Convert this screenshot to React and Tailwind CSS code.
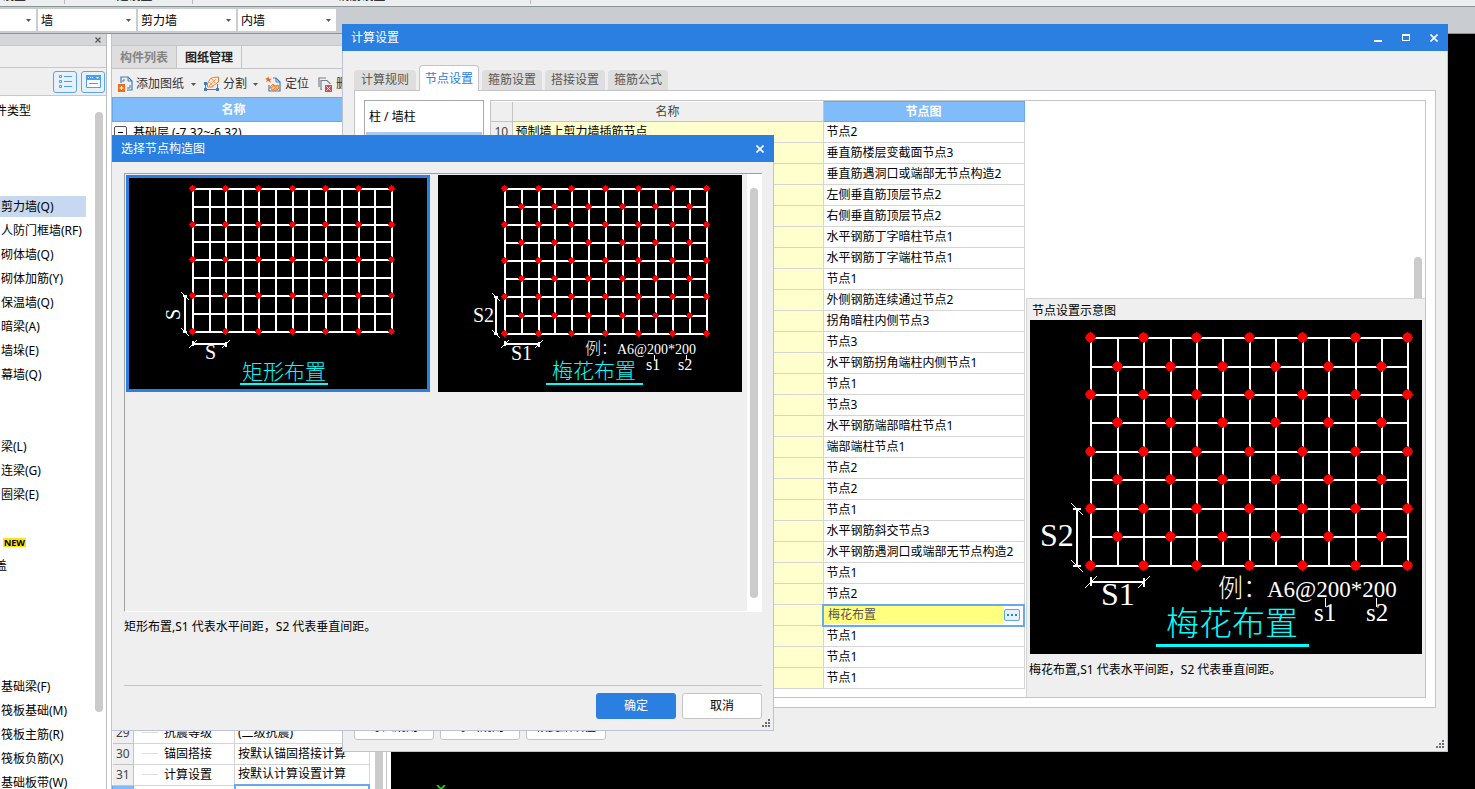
import React from "react";

const categories = [
  "", "", "",
  "剪力墙(Q)", "人防门框墙(RF)", "砌体墙(Q)", "砌体加筋(Y)", "保温墙(Q)", "暗梁(A)", "墙垛(E)", "幕墙(Q)",
  "", "",
  "梁(L)", "连梁(G)", "圈梁(E)",
  "", "NEW", "盖", "", "", "", "",
  "基础梁(F)", "筏板基础(M)", "筏板主筋(R)", "筏板负筋(X)", "基础板带(W)",
];

const nodeRows = [
  "节点2", "垂直筋楼层变截面节点3", "垂直筋遇洞口或端部无节点构造2", "左侧垂直筋顶层节点2",
  "右侧垂直筋顶层节点2", "水平钢筋丁字暗柱节点1", "水平钢筋丁字端柱节点1", "节点1",
  "外侧钢筋连续通过节点2", "拐角暗柱内侧节点3", "节点3", "水平钢筋拐角端柱内侧节点1",
  "节点1", "节点3", "水平钢筋端部暗柱节点1", "端部端柱节点1", "节点2", "节点2", "节点1",
  "水平钢筋斜交节点3", "水平钢筋遇洞口或端部无节点构造2", "节点1", "节点2", "梅花布置",
  "节点1", "节点1", "节点1",
];

const properties = [
  { no: 28, name: "", value: "" },
  { no: 29, name: "抗震等级", value: "(二级抗震)" },
  { no: 30, name: "锚固搭接", value: "按默认锚固搭接计算" },
  { no: 31, name: "计算设置", value: "按默认计算设置计算" },
];

const settingTabs = ["计算规则", "节点设置", "箍筋设置", "搭接设置", "箍筋公式"];

const rectDiagram = {
  width: 304, height: 217, radius: 3,
  xs: [67, 84, 100, 117, 133, 150, 167, 183, 200, 216, 233, 249, 266],
  ys: [14, 32, 50, 67, 85, 103, 121, 139, 157],
  staggered: false,
  dimV: { x: 59, from: 121, to: 157 },
  dimH: { y: 169, from: 67, to: 100 },
  texts: [{ x: 79, y: 184, size: 20, text: "S" }],
  rotated: { x: 54, y: 145, size: 20, text: "S" },
  title: { x: 116, y: 204, size: 21, text: "矩形布置" },
  underline: { x: 114, y: 208, width: 88, height: 2 },
  leaders: [],
};

const plumDiagram = {
  width: 304, height: 217, radius: 3,
  xs: [67, 84, 101, 117, 134, 151, 168, 185, 201, 218, 235, 252, 269],
  ys: [14, 32, 50, 68, 86, 104, 122, 141, 159],
  staggered: true,
  dimV: { x: 58, from: 122, to: 159 },
  dimH: { y: 169, from: 67, to: 101 },
  texts: [
    { x: 35, y: 147, size: 20, text: "S2" },
    { x: 73, y: 185, size: 20, text: "S1" },
    { x: 147, y: 179, size: 16, text: "例：" },
    { x: 179, y: 179, size: 14, text: "A6@200*200" },
    { x: 208, y: 195, size: 16, text: "s1" },
    { x: 240, y: 195, size: 16, text: "s2" },
  ],
  title: { x: 114, y: 203, size: 21, text: "梅花布置" },
  underline: { x: 108, y: 208, width: 97, height: 2 },
  leaders: [{ x: 216, from: 180, to: 185 }, { x: 248, from: 180, to: 185 }],
};

const previewDiagram = {
  width: 392, height: 334, radius: 5,
  xs: [61, 88, 114, 141, 167, 193, 220, 246, 273, 299, 326, 352, 378],
  ys: [18, 47, 75, 103, 132, 160, 189, 217, 246],
  staggered: true,
  dimV: { x: 47, from: 189, to: 246 },
  dimH: { y: 262, from: 61, to: 114 },
  texts: [
    { x: 10, y: 226, size: 32, text: "S2" },
    { x: 71, y: 285, size: 32, text: "S1" },
    { x: 188, y: 277, size: 25, text: "例：" },
    { x: 237, y: 277, size: 23, text: "A6@200*200" },
    { x: 284, y: 301, size: 25, text: "s1" },
    { x: 336, y: 301, size: 25, text: "s2" },
  ],
  title: { x: 136, y: 315, size: 33, text: "梅花布置" },
  underline: { x: 126, y: 324, width: 153, height: 3 },
  leaders: [{ x: 295, from: 278, to: 287 }, { x: 346, from: 278, to: 287 }],
};

const Diagram = ({ data }) => {
  const { xs, ys, radius, dimV, dimH, rotated, title, underline } = data;
  const left = xs[0];
  const right = xs[xs.length - 1];
  const top = ys[0];
  const bottom = ys[ys.length - 1];
  const tick = radius === 5 ? 4 : 2;
  const slash = radius === 5 ? 6 : 4;

  return (
    <svg
      width={data.width}
      height={data.height}
      viewBox={`0 0 ${data.width} ${data.height}`}
      className="block bg-black font-['Liberation_Serif','Noto_Sans_CJK_SC',serif] font-light"
      role="img"
      aria-label={title.text}
    >
      {/* Rebar grid */}
      <g stroke="#fff" strokeWidth="2" shapeRendering="crispEdges">
        {xs.map((x) => <line key={x} x1={x} x2={x} y1={top} y2={bottom} />)}
        {ys.map((y) => <line key={y} x1={left - 1} x2={right + 1} y1={y} y2={y} />)}
        <line x1={dimV.x} x2={dimV.x} y1={dimV.from} y2={dimV.to} />
        <line x1={dimV.x - tick} x2={dimV.x + tick} y1={dimV.from} y2={dimV.from} />
        <line x1={dimV.x - tick} x2={dimV.x + tick} y1={dimV.to} y2={dimV.to} />
        <line x1={dimH.from} x2={dimH.to} y1={dimH.y} y2={dimH.y} />
        <line x1={dimH.from} x2={dimH.from} y1={dimH.y - tick - 1} y2={dimH.y + tick} />
        <line x1={dimH.to} x2={dimH.to} y1={dimH.y - tick} y2={dimH.y + tick + 1} />
      </g>
      <g stroke="#fff" strokeWidth="1">
        {[dimV.from, dimV.to].map((y) => (
          <line key={y} x1={dimV.x - slash} y1={y - slash} x2={dimV.x + slash} y2={y + slash} />
        ))}
        {[dimH.from, dimH.to].map((x) => (
          <line key={x} x1={x - slash} y1={dimH.y + slash} x2={x + slash} y2={dimH.y - slash} />
        ))}
        {data.leaders.map((l) => (
          <line key={l.x} x1={l.x} x2={l.x} y1={l.from} y2={l.to} shapeRendering="crispEdges" />
        ))}
      </g>

      {/* Tie points */}
      <g fill="#f00" stroke="#f00">
        {ys.map((y, r) =>
          xs.map((x, c) => {
            const even = r % 2 === 0 && c % 2 === 0;
            const odd = r % 2 === 1 && c % 2 === 1;
            if (!even && !(data.staggered && odd)) return null;
            return (
              <g key={`${r}-${c}`}>
                <circle cx={x - 0.5} cy={y - 0.5} r={radius - 0.5} />
                <path d={`M${x - 1 - radius} ${y - 0.5}h${radius * 2 + 1}M${x - 0.5} ${y - 1 - radius}v${radius * 2 + 1}`} />
              </g>
            );
          })
        )}
      </g>

      <g fill="#fff">
        {data.texts.map((t) => (
          <text key={t.text} x={t.x} y={t.y} fontSize={t.size}>{t.text}</text>
        ))}
        {rotated && (
          <text x={rotated.x} y={rotated.y} fontSize={rotated.size} transform={`rotate(-90 ${rotated.x} ${rotated.y})`}>
            {rotated.text}
          </text>
        )}
      </g>
      <text x={title.x} y={title.y} fontSize={title.size} fill="#0ff">{title.text}</text>
      <rect {...underline} fill="#0ff" />
    </svg>
  );
};

const Combo = ({ label, value, width }) => (
  <div className={`relative h-[22px] bg-white ${width}`}>
    <select aria-label={label} defaultValue={value} className="block h-full w-full appearance-none bg-white pl-[3px] pt-[2px] text-xs text-black outline-none">
      <option>{value}</option>
    </select>
    <svg width="5" height="3" viewBox="0 0 5 3" className="pointer-events-none absolute right-[5px] top-[10px]">
      <path d="M0 0h5L2.5 3z" fill="#555" />
    </svg>
  </div>
);

const Caret = () => (
  <svg width="5" height="3" viewBox="0 0 5 3" className="shrink-0">
    <path d="M0 0h5L2.5 3z" fill="#555" />
  </svg>
);

const CloseIcon = ({ color = "#fff" }) => (
  <svg width="8" height="8" viewBox="0 0 8 8">
    <path d="M.5.5l7 7M7.5.5l-7 7" stroke={color} strokeWidth="1.6" fill="none" />
  </svg>
);

const Grip = () => (
  <svg width="8" height="8" viewBox="0 0 8 8" className="absolute bottom-[3px] right-[3px]" fill="#6d6d78">
    <path d="M6 0h2v2H6zM3 3h2v2H3zM6 3h2v2H6zM0 6h2v2H0zM3 6h2v2H3zM6 6h2v2H6z" />
  </svg>
);

const AddDrawingIcon = () => (
  <svg width="15" height="16" viewBox="0 0 15 16" fill="none">
    <path d="M3 7V1h7l4 4v9H9" stroke="#3b7fc0" strokeWidth="1.2" />
    <path d="M10 1v4h4M5 6V4h2M12 9v3h-3" stroke="#3b7fc0" />
    <path d="M0 8h7v8H0z" fill="#ee6c1c" />
    <path d="M3.5 10v4M1.5 12h4" stroke="#fff" strokeWidth="1.2" />
  </svg>
);

const SplitIcon = () => (
  <svg width="17" height="16" viewBox="0 0 17 16" fill="none">
    <path d="M2.5 14V7M14.5 14V8M1 13.5h15M1 7.5h4" stroke="#3b7fc0" />
    <path d="M1 6h3v3H1zM1 12h3v3H1zM13 12h3v3h-3z" fill="#3b7fc0" />
    <path d="M4.500 7.500l3-5 3-1 5-.5v5l-3 2-3 3h-5z" fill="#fdeadb" stroke="#ee7d2e" />
    <path d="M6 10l7-7M6 6l4 4M9 3l3 4" stroke="#ee7d2e" strokeWidth=".7" />
  </svg>
);

const LocateIcon = () => (
  <svg width="16" height="16" viewBox="0 0 16 16" fill="none">
    <path d="M8 2h3l4 4v9H4V9" stroke="#3b7fc0" strokeWidth="1.2" />
    <path d="M11 2v4h4" stroke="#3b7fc0" />
    <path d="M3 0l1 2.500 3 .5-2 1 1 3-2.500-2L1 6l1-2-2-1.500 2.500-.5z" fill="#ee6c1c" />
    <path d="M5 11l3-3 2 2 3-1 1 3-2 2H7z" fill="#f8c49b" stroke="#ee7d2e" />
    <path d="M6 12l3-3M8 14l4-4M8 9l4 4" stroke="#ee7d2e" strokeWidth=".8" />
  </svg>
);

const DeleteIcon = () => (
  <svg width="15" height="15" viewBox="0 0 15 15" fill="none">
    <path d="M1 10V1h7M4 12.5H3V3.5h6l3 3V7" stroke="#75828c" strokeWidth="1.2" />
    <path d="M7 8h7v7H7z" fill="#d8474d" />
    <path d="M8.5 9.5l4 4M12.5 9.5l-4 4" stroke="#fff" />
  </svg>
);

const CategoryPanel = () => (
  <aside className="flex w-[107px] shrink-0 flex-col border-r border-[#bbbbc3] bg-white">
    <div className="flex h-3 items-center justify-end border-b border-[#c4c6cb] bg-[#d5d5da] pr-[5px]">
      <button aria-label="关闭" className="flex"><svg width="6" height="6" viewBox="0 0 6 6"><path d="M.5.5l5 5M5.5.5l-5 5" stroke="#555" strokeWidth="1.2" /></svg></button>
    </div>
    <div className="h-[22px] border-b border-[#c8c8c8] bg-[#efefef]" />
    <div className="flex h-7 items-center justify-end gap-1 border-b border-[#c8c8c8] bg-[#efefef] pr-px">
      <button aria-label="列表" className="flex h-[22px] w-6 items-center justify-center rounded-[3px] border border-[#5aa5ef] bg-[#e6f1fc]">
        <svg width="13" height="13" viewBox="0 0 13 13" fill="none" stroke="#4f9eea">
          <path d="M.5.5h2v2h-2zM.5 5.5h2v2h-2zM.5 10.5h2v2h-2zM5 1.5h8M5 6.5h8M5 11.5h8" />
        </svg>
      </button>
      <button aria-label="视图" className="flex h-[22px] w-6 items-center justify-center rounded-[3px] border border-[#5aa5ef] bg-[#e6f1fc]">
        <svg width="15" height="13" viewBox="0 0 15 13" fill="none">
          <path d="M.5.5h14v12H.5z" fill="#fff" stroke="#4f9eea" />
          <path d="M0 0h15v5H0z" fill="#4f9eea" />
          <path d="M2 2h1v1H2zM4 2h1v1H4zM6 2h1v1H6zM10 2h3l-1.5 2z" fill="#fff" />
          <path d="M3 8.5h9" stroke="#4f9eea" />
        </svg>
      </button>
    </div>
    <div className="flex min-h-0 flex-1 justify-between">
      <div className="min-w-0 flex-1 overflow-hidden whitespace-nowrap">
        <p className="-ml-[17px] pt-1 leading-[22px]">构件类型</p>
        {categories.map((item, i) => {
          if (item === "NEW") {
            return (
              <div key={i} className="flex h-6 items-center pl-[3px]">
                <span className="bg-[#ffe11a] px-px text-[9px] font-bold leading-[9px]">NEW</span>
              </div>
            );
          }
          if (item === "盖") return <p key={i} className="-ml-[5px] h-6 leading-6">{item}</p>;
          return (
            <div key={i} className="flex h-6 items-center">
              <span className={i === 3 ? "w-[86px] bg-[#c7d9f1] pl-px leading-[21px]" : "pl-px leading-[21px]"}>{item}</span>
            </div>
          );
        })}
      </div>
      <div className="mr-[3px] mt-4 h-[600px] w-2 shrink-0 rounded-full bg-[#cbcbcb]" />
    </div>
  </aside>
);

const DrawingPanel = () => (
  <section className="flex w-[280px] shrink-0 flex-col border-l border-[#bcc3d0] bg-white">
    <div className="h-3 shrink-0 border-b border-[#c4c6cb] bg-[#d5d5da]" />
    <div className="flex h-[23px] shrink-0 border-b border-[#c4c4c8] bg-[#efefef] font-bold leading-6">
      <button className="w-[65px] border-r border-[#c4c4c8] bg-[#dedede] text-[#858585]">构件列表</button>
      <button className="w-[65px] border-r border-[#c4c4c8] text-[#222]">图纸管理</button>
    </div>
    <div className="flex h-7 shrink-0 items-center overflow-hidden whitespace-nowrap bg-[#efefef] pl-[6px] pt-[2px] text-[#333]">
      <button className="flex items-center gap-[3px]"><AddDrawingIcon />添加图纸</button>
      <button aria-label="更多添加" className="pl-[7px] pr-[7px]"><Caret /></button>
      <button className="flex items-center gap-[3px]"><SplitIcon />分割</button>
      <button aria-label="更多分割" className="pl-[6px] pr-[7px]"><Caret /></button>
      <button className="flex items-center gap-1"><LocateIcon />定位</button>
      <button className="ml-[9px] flex items-center gap-[3px]"><DeleteIcon />删除</button>
    </div>
    <div className="h-[25px] w-[243px] shrink-0 border border-[#69a9ea] bg-[#80bbfa] text-center font-bold leading-[23px] text-white">名称</div>
    <div className="h-[579px] shrink-0">
      <div className="flex items-center gap-1 pl-[2px] pt-[2px] leading-[17px]">
        <button aria-label="折叠" className="flex h-[13px] w-[13px] items-center justify-center rounded-[2px] border border-[#555]">
          <span className="h-px w-[5px] bg-black" />
        </button>
        <span className="pl-[2px]">基础层 (-7.32~-6.32)</span>
      </div>
    </div>
    <div className="flex">
      <table className="w-[258px] table-fixed border-collapse">
        <tbody>
          {properties.map((p) => (
            <tr key={p.no} className="h-[21px] whitespace-nowrap">
              <td className="w-[21px] border-b border-r border-[#c4c4c4] bg-[#efefef] p-0 text-center text-[#444]">{p.no}</td>
              <td className="w-[101px] border-b border-r border-[#d5d5d5] p-0">
                <div className="flex items-center gap-[6px] pl-2">
                  <span className="h-px w-4 bg-[#ddd]" />{p.name}
                </div>
              </td>
              <td className="border-b border-r border-[#d5d5d5] p-0 pl-[3px]">{p.value}</td>
            </tr>
          ))}
          <tr className="h-[21px]">
            <td className="border border-[#69a9ea] bg-[#80bbfa] p-0" />
            <td className="p-0" />
            <td className="border-2 border-[#69a9ea] p-0" />
          </tr>
        </tbody>
      </table>
      <div className="ml-[5px] w-2 bg-[#cbcbcb]" />
      <div className="ml-[3px] w-px bg-[#c4c4c4]" />
    </div>
  </section>
);

const SettingsDialog = () => (
  <div role="dialog" aria-label="计算设置" className="absolute left-[342px] right-[27px] top-6 flex flex-col border-b border-x border-[#bcc3d0] bg-[#efefef]">
    <header className="-mx-px flex h-[27px] items-center justify-between bg-[#2b7fe1] pl-[9px] pr-[10px] text-white">
      <h1>计算设置</h1>
      <div className="flex items-center gap-5">
        <button aria-label="最小化" className="flex h-2 w-2 items-end"><span className="h-[2px] w-full bg-white" /></button>
        <button aria-label="最大化" className="h-[7px] w-2 border border-t-2 border-white" />
        <button aria-label="关闭" className="flex"><CloseIcon /></button>
      </div>
    </header>

    <nav className="relative z-10 flex items-end gap-[3px] pl-[11px] pt-[14px]">
      {settingTabs.map((tab) =>
        tab === "节点设置" ? (
          <button key={tab} className="-mb-px h-[26px] w-[60px] rounded-t-[4px] border border-b-0 border-[#c4c4c8] bg-white text-[#2b7fe1]">{tab}</button>
        ) : (
          <button key={tab} className="h-5 w-[60px] rounded-t-[4px] bg-[#dedede] text-[#555] first:w-[62px]">{tab}</button>
        )
      )}
    </nav>

    <div className="mx-[11px] flex h-[618px] border border-[#c4c4c8] bg-white p-[9px]">
      <div className="h-[597px] w-[120px] shrink-0 border border-[#aaa] p-px">
        <p className="pl-[3px] leading-[30px]">柱 / 墙柱</p>
        <div className="h-[30px] bg-[#a9c8ef]" />
      </div>

      <div className="ml-[6px] flex h-[598px] min-w-0 flex-1 border border-[#c4c4c4]">
        <table className="h-[587px] w-[534px] shrink-0 table-fixed border-collapse">
          <thead>
            <tr className="h-5 bg-[#efefef] leading-[19px] text-[#444]">
              <th className="w-[21px] border-b border-r border-[#c4c4c4] p-0" />
              <th className="border-b border-r border-[#c4c4c4] p-0 font-normal">名称</th>
              <th className="w-[201px] border border-[#69a9ea] bg-[#80bbfa] p-0 text-white">节点图</th>
            </tr>
          </thead>
          <tbody>
            {nodeRows.map((node, i) => (
              <tr key={i} className="h-[21px] whitespace-nowrap">
                <td className="border-b border-r border-[#c4c4c4] bg-[#efefef] p-0 text-center text-[#444]">{i + 10}</td>
                <td className="border-b border-r border-[#d5d5d5] bg-[#ffffce] p-0 pl-[3px]">{i === 0 && "预制墙上剪力墙插筋节点"}</td>
                {node === "梅花布置" ? (
                  <td className="border-2 border-[#69a9ea] p-0">
                    <div className="flex h-[18px] items-center justify-between bg-[#ffff80] text-[#555]">
                      <span className="pl-1">{node}</span>
                      <span className="flex h-full items-center bg-white pr-[3px]">
                        <button aria-label="选择节点图" className="flex h-3 w-4 items-center justify-center gap-[2px] rounded-[2px] border border-[#5aa5ef] bg-[#e6f1fc]">
                          <span className="h-[2px] w-[2px] bg-[#2f80c8]" />
                          <span className="h-[2px] w-[2px] bg-[#2f80c8]" />
                          <span className="h-[2px] w-[2px] bg-[#2f80c8]" />
                        </button>
                      </span>
                    </div>
                  </td>
                ) : (
                  <td className="border-b border-r border-[#d5d5d5] p-0 pl-[3px]">{node}</td>
                )}
              </tr>
            ))}
          </tbody>
        </table>

        <div className="ml-px flex min-w-0 flex-1 flex-col">
          <div className="flex h-[197px] items-end justify-end pr-[3px]">
            <div className="h-[41px] w-2 rounded-t-full bg-[#cbcbcb]" />
          </div>
          <div className="flex-1 border-l border-t border-[#d5d5d5] bg-[#efefef] pl-[3px]">
            <p className="pl-[2px] pt-[2px] leading-[19px]">节点设置示意图</p>
            <Diagram data={previewDiagram} />
            <p className="-ml-px pt-[6px] leading-[19px]">梅花布置,S1 代表水平间距，S2 代表垂直间距。</p>
          </div>
        </div>
      </div>
    </div>

    <footer className="flex gap-[6px] px-[11px] pb-[11px] pt-[6px]">
      {["导入规则", "导出规则", "恢复默认值"].map((label) => (
        <button key={label} className="h-[26px] w-20 rounded-[3px] border border-[#c4c4c8] bg-white">{label}</button>
      ))}
    </footer>
    <Grip />
  </div>
);

const PickerDialog = () => (
  <div role="dialog" aria-label="选择节点构造图" className="absolute left-[111px] top-[135px] w-[663px] border-b border-x border-[#bcc3d8] bg-[#efefef]">
    <header className="-mr-px flex h-[27px] items-center justify-between bg-[#2b7fe1] pl-[9px] pr-[10px] text-white">
      <h2>选择节点构造图</h2>
      <button aria-label="关闭" className="flex"><CloseIcon /></button>
    </header>

    <div className="pl-3 pr-[11px] pt-[11px]">
      <div className="flex h-[439px] justify-between border-l border-t border-b border-b-white border-[#a0a0a0]">
        <div className="flex gap-2 pl-px pt-px">
          <button className="relative h-[217px]">
            <Diagram data={rectDiagram} />
            <span className="absolute inset-0 border-[3px] border-[#2b7fe1]" />
          </button>
          <button className="h-[217px]"><Diagram data={plumDiagram} /></button>
        </div>
        <div className="flex w-[15px] bg-white pl-[3px] pt-[14px]">
          <div className="h-[410px] w-2 rounded-full bg-[#cbcbcb]" />
        </div>
      </div>
      <p className="h-[73px] pt-[5px] leading-[19px]">矩形布置,S1 代表水平间距，S2 代表垂直间距。</p>
      <div className="flex justify-end gap-[6px] border-t border-[#c4c4c4] pb-[11px] pt-[7px]">
        <button className="h-[26px] w-20 rounded-[3px] bg-[#2b7fe1] text-white">确定</button>
        <button className="h-[26px] w-20 rounded-[3px] border border-[#c4c4c8] bg-white">取消</button>
      </div>
    </div>
    <Grip />
  </div>
);

const App = () => {
  return (
    <div className="relative flex h-screen flex-col overflow-hidden bg-[#c9ccd1] font-['Noto_Sans','Noto_Sans_CJK_SC',sans-serif] text-xs text-black">
      {/* Bottom edge of the ribbon groups */}
      <div className="flex h-[7px] shrink-0 items-end overflow-hidden border-b border-[#8d9494] bg-[#ebefef] text-center leading-4">
        <span className="mb-[2px] flex w-[65px] justify-end border-r border-[#bbb] pr-[38px] whitespace-nowrap">基本设置</span>
        <span className="mb-[2px] w-32 border-r border-[#bbb]">土建设置</span>
        <span className="mb-[2px] w-[338px] border-r border-[#bbb]">钢筋设置</span>
      </div>

      <div className="flex h-[27px] shrink-0 gap-[2px] border-b border-[#8d9494] pt-[2px]">
        <Combo label="楼层" value="" width="w-9" />
        <Combo label="构件大类" value="墙" width="w-[98px]" />
        <Combo label="构件类型" value="剪力墙" width="w-[98px]" />
        <Combo label="构件名称" value="内墙" width="w-[98px]" />
      </div>

      <main className="flex min-h-0 flex-1 overflow-hidden bg-white">
        <CategoryPanel />
        <div className="w-1 shrink-0" />
        <DrawingPanel />
        <div className="flex min-w-0 flex-1 items-end bg-black pl-[45px]">
          <svg width="10" height="4" viewBox="0 0 10 4"><path d="M1 0l4 4 4-4" stroke="#0f0" strokeWidth="1.5" fill="none" /></svg>
        </div>
      </main>

      <SettingsDialog />
      <PickerDialog />
    </div>
  );
};

export default App;
